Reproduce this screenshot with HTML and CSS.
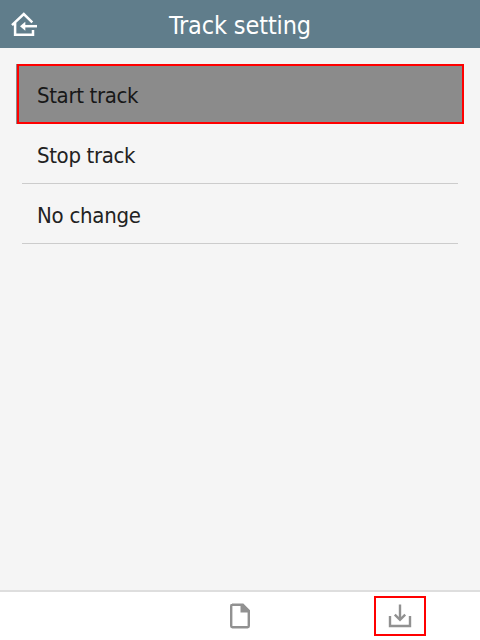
FILE: index.html
```html
<!DOCTYPE html>
<html lang="en">
<head>
<meta charset="utf-8">
<title>Track setting</title>
<link rel="stylesheet" href="styles.css">
</head>
<body>
<header class="header">
  <svg class="home" width="48" height="48" viewBox="0 0 48 48" fill="none" stroke="#fff" stroke-width="2.5">
    <path d="M12 24.2L23.8 13L32.3 21.3M15.1 22V33.8H33V29"/>
    <path d="M37 25.2H22"/>
    <path d="M20 25.2L25.3 20.7V29.7Z" fill="#fff" stroke="none"/>
  </svg>
  <h1 class="title">Track setting</h1>
</header>
<main class="content">
  <ul class="list">
    <li class="item selected"><span class="label">Start track</span></li>
    <li class="item"><span class="label">Stop track</span></li>
    <li class="item"><span class="label wide">No change</span></li>
  </ul>
</main>
<footer class="footer">
  <div></div>
  <div class="action">
    <svg width="24" height="28" viewBox="0 0 24 28">
      <path d="M4 2.8H14.8L20.8 8.8V24Q20.8 25.2 19.6 25.2H4.4Q3.2 25.2 3.2 24V4Q3.2 2.8 4.4 2.8Z" fill="none" stroke="#919191" stroke-width="2.4"/>
      <path d="M12.5 2H15L21.5 8.5V10.5H12.5Z" fill="#919191"/>
    </svg>
  </div>
  <div class="action">
    <div class="highlight">
      <svg width="28" height="28" viewBox="0 0 28 28" fill="none" stroke="#919191" stroke-width="2.4">
        <path d="M4 14V24H24V14M14 2.5V17.5M8.8 12.6L14 17.8L19.2 12.6"/>
      </svg>
    </div>
  </div>
</footer>
</body>
</html>
```

FILE: styles.css
```css
* { box-sizing: border-box; }
body {
  margin: 0;
  height: 640px;
  display: flex;
  flex-direction: column;
  overflow: hidden;
  background: #f5f5f5;
  color: #222;
  font-family: "DejaVu Sans Condensed", "DejaVu Sans", sans-serif;
  font-stretch: condensed;
}
.header {
  height: 48px;
  display: grid;
  grid-template-columns: 48px 1fr 48px;
  align-items: center;
  background: #607d8b;
  color: #fff;
}
.home { display: block; }
.title {
  margin: 0;
  font-size: 25px;
  line-height: 48px;
  font-weight: 400;
  text-align: center;
  white-space: nowrap;
  letter-spacing: -0.12px;
  padding-top: 2px;
}
.content { flex: 1; padding: 16px; }
.list { list-style: none; margin: 0; padding: 0; }
.item {
  height: 60px;
  margin: 0 6px;
  padding: 5px 15px 0;
  display: flex;
  align-items: center;
  border-bottom: 1px solid #ccc;
}
.selected {
  margin: 0 0 0 1px;
  padding: 3px 18px 0;
  background: #8b8b8b;
  color: #181818;
  border: 2px solid #f00;
  box-shadow: -1px 0 0 #8b8b8b;
}
.label {
  font-size: 22px;
  line-height: 30px;
  white-space: nowrap;
  letter-spacing: -0.35px;
}
.wide { letter-spacing: -0.27px; }
.footer {
  height: 50px;
  display: grid;
  grid-template-columns: repeat(3, 1fr);
  background: #fff;
  border-top: 2px solid #dedede;
}
.action { display: flex; align-items: center; justify-content: center; }
.highlight {
  width: 52px;
  height: 40px;
  display: flex;
  align-items: center;
  justify-content: center;
  border: 2px solid #f00;
}
```
